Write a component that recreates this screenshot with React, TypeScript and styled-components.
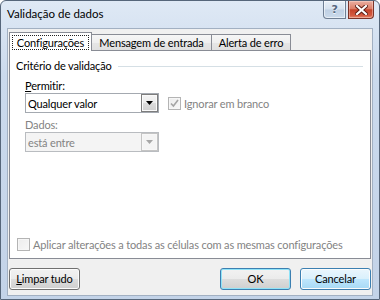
import React from 'react';
import styled, { createGlobalStyle } from 'styled-components';

const GlobalStyle = createGlobalStyle`
    html, body {
        margin: 0;
        padding: 0;
        background: #fff;
    }
    body {
        font-family: Lato, "Noto Sans", sans-serif;
        font-size: 11px;
        letter-spacing: -0.15px;
        color: #000;
        white-space: nowrap;
    }
`;

const Window = styled.div`
    width: 380px;
    height: 300px;
    box-sizing: border-box;
    border: 1px solid #56667a;
    border-radius: 6px 6px 0 0;
    background: linear-gradient(180deg, #dfe9f5 0%, #cbdaed 25%, #c3d3e8 100%);
    padding: 0 6px 3px;
    display: flex;
    flex-direction: column;
`;

const TitleBar = styled.div`
    height: 27px;
    flex-shrink: 0;
    display: flex;
    align-items: flex-start;
    margin-right: -1px;
`;

const Title = styled.span`
    margin-top: 5px;
    line-height: 16px;
    font-size: 11.5px;
    letter-spacing: 0;
`;

const Captions = styled.div`
    margin-left: auto;
    display: flex;
    gap: 2px;
`;

const HelpButton = styled.div`
    width: 23px;
    height: 18px;
    box-sizing: border-box;
    border: 1px solid #6f7f94;
    border-top: none;
    border-radius: 0 0 0 4px;
    background: linear-gradient(180deg, #e9f0f8 0%, #d6e2ef 48%, #bfd0e4 52%, #cbdaeb 100%);
    box-shadow: inset 0 0 0 1px rgba(255, 255, 255, 0.55);
    display: flex;
    align-items: center;
    justify-content: center;
    font-family: "DejaVu Sans", sans-serif;
    font-weight: bold;
    font-size: 11px;
    color: #56677e;
    text-shadow: 0 1px 0 #f4f8fc;
`;

const CloseButton = styled.div`
    width: 26px;
    height: 18px;
    box-sizing: border-box;
    border: 1px solid #7a3328;
    border-top: none;
    border-radius: 0 0 4px 0;
    background: linear-gradient(180deg, #eab0a2 0%, #dc7d67 45%, #c5432a 52%, #d45a40 85%, #e38b70 100%);
    box-shadow: inset 0 0 0 1px rgba(255, 220, 210, 0.45);
    display: flex;
    align-items: center;
    justify-content: center;
`;

const Client = styled.div`
    flex: 1;
    box-sizing: border-box;
    background: #f0f0f0;
    border: 1px solid #a2b0c2;
    padding: 3px 1px 5px;
    display: flex;
    flex-direction: column;
`;

const TabStrip = styled.div`
    height: 18px;
    display: flex;
    align-items: flex-end;
`;

const Tab = styled.div<{ $active?: boolean; $w: number }>`
    position: relative;
    z-index: ${p => (p.$active ? 2 : 0)};
    width: ${p => p.$w}px;
    height: ${p => (p.$active ? 19 : 16)}px;
    margin-bottom: ${p => (p.$active ? -1 : 0)}px;
    box-sizing: border-box;
    border: 1px solid #898c95;
    border-bottom: none;
    background: ${p => (p.$active
        ? '#fff'
        : 'linear-gradient(180deg, #f6f6f6 0%, #efefef 50%, #e6e6e6 51%, #e0e0e0 100%)')};
    display: flex;
    align-items: center;
    justify-content: center;
    padding: ${p => (p.$active ? '2px 2px 1px' : '0 2px')};
    line-height: 13px;
    & + & {
        margin-left: -1px;
    }
`;

const FocusRect = styled.span`
    flex: 1;
    align-self: stretch;
    display: flex;
    align-items: center;
    justify-content: center;
    border: 1px dotted #222;
`;

const Panel = styled.div`
    height: 209px;
    box-sizing: border-box;
    background: #fff;
    border: 1px solid #898c95;
    padding: 7px 0 6px 6px;
    display: flex;
    flex-direction: column;
`;

const GroupHeader = styled.div`
    display: flex;
    align-items: center;
    line-height: 16px;
    height: 16px;
    &::after {
        content: '';
        flex: 1;
        height: 1px;
        background: #d5dfe5;
        margin: 1px 7px 0 6px;
    }
`;

const GroupBody = styled.div`
    margin: 2px 0 0 9px;
    display: flex;
    flex-direction: column;
`;

const FieldLabel = styled.div<{ $disabled?: boolean; $gap: number }>`
    margin-top: ${p => p.$gap}px;
    line-height: 14px;
    color: ${p => (p.$disabled ? '#838383' : '#000')};
`;

const FieldRow = styled.div`
    display: flex;
    align-items: center;
`;

const Combo = styled.div<{ $disabled?: boolean }>`
    width: 134px;
    height: 20px;
    box-sizing: border-box;
    border: 1px solid ${p => (p.$disabled ? '#b9bcc0' : '#a4a9b0')};
    background: ${p => (p.$disabled ? '#f4f4f4' : '#fff')};
    color: ${p => (p.$disabled ? '#838383' : '#000')};
    display: flex;
    align-items: center;
    padding-left: 2px;
`;

const ComboButton = styled.div<{ $disabled?: boolean }>`
    margin-left: auto;
    width: 17px;
    height: 100%;
    box-sizing: border-box;
    border: 1px solid ${p => (p.$disabled ? '#c4c4c4' : '#7d7d7d')};
    background: ${p => (p.$disabled
        ? '#f4f4f4'
        : 'linear-gradient(180deg, #f4f4f4 0%, #ececec 50%, #dcdcdc 51%, #d0d0d0 100%)')};
    box-shadow: inset 0 0 0 1px ${p => (p.$disabled ? '#f7f7f7' : '#fafafa')};
    display: flex;
    align-items: center;
    justify-content: center;
`;

const Check = styled.div`
    width: 13px;
    height: 13px;
    box-sizing: border-box;
    border: 1px solid #b4b4b4;
    background: linear-gradient(135deg, #ececec 0%, #f7f7f7 100%);
    box-shadow: inset 0 0 0 1px #f6f6f6;
    display: flex;
    align-items: center;
    justify-content: center;
    flex-shrink: 0;
`;

const CheckField = styled.label<{ $indent: number }>`
    display: flex;
    align-items: center;
    gap: 3px;
    margin-left: ${p => p.$indent}px;
    color: #838383;
    line-height: 15px;
`;

const BottomCheck = styled(CheckField)`
    margin-top: auto;
`;

const ButtonRow = styled.div`
    margin-top: 9px;
    display: flex;
    gap: 9px;
`;

const Button = styled.div<{ $variant?: 'default' | 'hot'; $push?: boolean }>`
    width: 71px;
    height: 22px;
    box-sizing: border-box;
    margin-left: ${p => (p.$push ? 'auto' : '0')};
    border: 1px solid ${p => (p.$variant ? '#3c7fb1' : '#707070')};
    border-radius: 3px;
    background: ${p => (p.$variant === 'hot'
        ? 'linear-gradient(180deg, #eaf6fd 0%, #d9f0fc 50%, #bee6fd 51%, #a7d9f5 100%)'
        : 'linear-gradient(180deg, #f2f2f2 0%, #ebebeb 50%, #dddddd 51%, #cfcfcf 100%)')};
    box-shadow: inset 0 0 0 1px ${p => (p.$variant === 'default' ? '#8fe3f8' : '#fcfcfc')};
    display: flex;
    align-items: center;
    justify-content: center;
    line-height: 14px;
`;

const Arrow = ({ color }: { color: string }) => (
    <svg width="7" height="4" viewBox="0 0 7 4">
        <path d="M0 0H7L3.5 4Z" fill={color} />
    </svg>
);

const Tick = () => (
    <svg width="9" height="9" viewBox="0 0 9 9">
        <path d="M1 4.5L3.4 7L8 1" fill="none" stroke="#a4a4a4" strokeWidth="1.6" />
    </svg>
);

const CloseGlyph = () => (
    <svg width="13" height="10" viewBox="0 0 13 10">
        <path d="M2 1L11 9M11 1L2 9" stroke="#5a1b12" strokeWidth="4" strokeLinecap="square" />
        <path d="M2 1L11 9M11 1L2 9" stroke="#fff" strokeWidth="2.2" strokeLinecap="square" />
    </svg>
);

export default function App() {
    return (
        <>
            <GlobalStyle />
            <Window>
                <TitleBar>
                    <Title>Validação de dados</Title>
                    <Captions>
                        <HelpButton>?</HelpButton>
                        <CloseButton><CloseGlyph /></CloseButton>
                    </Captions>
                </TitleBar>
                <Client>
                    <TabStrip>
                        <Tab $active $w={83}><FocusRect>Configurações</FocusRect></Tab>
                        <Tab $w={121}>Mensagem de entrada</Tab>
                        <Tab $w={80}>Alerta de erro</Tab>
                    </TabStrip>
                    <Panel>
                        <GroupHeader>Critério de validação</GroupHeader>
                        <GroupBody>
                            <FieldLabel $gap={3}><u>P</u>ermitir:</FieldLabel>
                            <FieldRow>
                                <Combo>
                                    Qualquer valor
                                    <ComboButton><Arrow color="#000" /></ComboButton>
                                </Combo>
                                <CheckField $indent={9}>
                                    <Check><Tick /></Check>
                                    Ignorar em branco
                                </CheckField>
                            </FieldRow>
                            <FieldLabel $disabled $gap={5}>Dados:</FieldLabel>
                            <FieldRow>
                                <Combo $disabled>
                                    está entre
                                    <ComboButton $disabled><Arrow color="#a6a6a6" /></ComboButton>
                                </Combo>
                            </FieldRow>
                        </GroupBody>
                        <BottomCheck $indent={1}>
                            <Check />
                            Aplicar alterações a todas as células com as mesmas configurações
                        </BottomCheck>
                    </Panel>
                    <ButtonRow>
                        <Button><span><u>L</u>impar tudo</span></Button>
                        <Button $variant="default" $push>OK</Button>
                        <Button $variant="hot">Cancelar</Button>
                    </ButtonRow>
                </Client>
            </Window>
        </>
    );
}
